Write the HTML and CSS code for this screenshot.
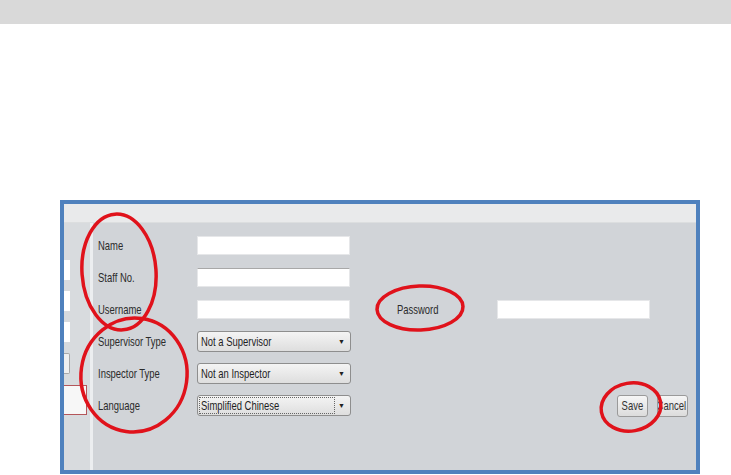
FILE: index.html
```html
<!DOCTYPE html>
<html>
<head>
<meta charset="utf-8">
<title>User details</title>
<link rel="stylesheet" href="styles.css">
</head>
<body>
<div class="topbar"></div>

<div class="shot">
  <div class="shot_head"></div>
  <div class="shot_body">
    <div class="side">
      <div class="stub"></div>
      <div class="stub"></div>
      <div class="stub"></div>
      <div class="stub stub_btn"></div>
      <div class="stub stub_red"></div>
    </div>
    <div class="sep"></div>
    <div class="form">
      <div class="row">
        <span class="lbl">Name</span>
        <input class="txt" type="text">
      </div>
      <div class="row">
        <span class="lbl">Staff No.</span>
        <input class="txt txt_dark" type="text">
      </div>
      <div class="row">
        <span class="lbl">Username</span>
        <input class="txt" type="text">
        <span class="lbl lbl_pw">Password</span>
        <input class="txt" type="password">
      </div>
      <div class="row">
        <span class="lbl">Supervisor Type</span>
        <div class="sel"><span class="sel_val"><span class="sq">Not a Supervisor</span></span><span class="arrow">&#9660;</span></div>
      </div>
      <div class="row">
        <span class="lbl">Inspector Type</span>
        <div class="sel"><span class="sel_val"><span class="sq">Not an Inspector</span></span><span class="arrow">&#9660;</span></div>
      </div>
      <div class="row">
        <span class="lbl">Language</span>
        <div class="sel"><span class="sel_val sel_focus"><span class="sq">Simplified Chinese</span></span><span class="arrow">&#9660;</span></div>
        <div class="btns">
          <button class="btn"><span class="sq sq_mid">Save</span></button>
          <button class="btn btn_cut"><span class="sq sq_right">Cancel</span></button>
        </div>
      </div>
    </div>
  </div>
</div>

<!-- hand drawn marks on top of the screenshot -->
<svg class="marks" width="731" height="475" viewBox="0 0 731 475">
  <g fill="none" stroke="#e0121b" stroke-width="3.5">
    <ellipse cx="119" cy="272" rx="37" ry="58" transform="rotate(-4 119 272)"/>
    <ellipse cx="134" cy="375" rx="53" ry="57" transform="rotate(8 134 375)"/>
    <ellipse cx="420" cy="308" rx="43" ry="22" transform="rotate(-2 420 308)"/>
    <ellipse cx="631" cy="407" rx="30" ry="24" transform="rotate(-10 631 407)"/>
  </g>
</svg>
</body>
</html>
```

FILE: styles.css
```css
body{margin:0;padding:0;background:#fff;font-family:"Liberation Sans",Arial,sans-serif;}
.topbar{height:24px;background:#d9d9d9;}

.shot{width:632px;height:266px;margin:176px 0 0 60px;border:4px solid #4f81bd;background:#d1d4d8;display:flex;flex-direction:column;}
.shot_head{height:18px;background:#e9eaeb;border-bottom:1px solid #dcdedf;}
.shot_body{flex:1;display:flex;}

.side{width:26px;background:#d8dbde;padding-top:37px;display:flex;flex-direction:column;gap:11px;}
.stub{width:6px;height:20px;background:#fff;}
.stub_btn{width:5px;height:19px;background:#f0f0f0;border:1px solid #a9a9a9;border-left:none;border-radius:0 2px 2px 0;}
.stub_red{width:22px;height:28px;background:#f7f7f7;border:1px solid #b4565a;border-left:none;}
.sep{width:3px;background:#eceef0;}

/* the screenshot was squeezed sideways, so the text is too */
.sq{display:inline-block;transform:scaleX(.7);transform-origin:left center;white-space:nowrap;}
.sq_mid{transform-origin:center;}
.sq_right{transform-origin:right center;}

.form{flex:1;padding:12px 8px 0 5px;}
.row{display:flex;align-items:center;height:21px;margin-bottom:11px;}
.lbl{width:99px;font-size:13.5px;color:#2b2b2b;transform:scaleX(.7);transform-origin:left center;white-space:nowrap;}
.lbl_pw{margin:0 46px 0 47px;width:54px;}
.txt{width:153px;height:19px;margin:0;padding:0;border:1px solid #e6e7e9;background:#fff;box-sizing:border-box;}
.txt_dark{border-top-color:#a8a8a8;}

.sel{width:154px;height:21px;box-sizing:border-box;border:1px solid #8e8e8e;border-radius:3px;background:linear-gradient(#f4f4f4,#dedede);display:flex;align-items:center;justify-content:space-between;padding:0 5px 0 1px;font-size:13.5px;color:#1e1e1e;}
.sel_val{padding:0 1px;line-height:15px;border:1px dotted transparent;width:132px;overflow:hidden;}
.sel_focus{border-color:#666;}
.arrow{font-size:7px;color:#222;}

.btns{margin-left:auto;display:flex;gap:9px;}
.btn{width:31px;height:22px;padding:0;border:1px solid #9a9a9a;border-radius:3px;background:linear-gradient(#f6f6f6,#dcdcdc);font-family:inherit;font-size:13.5px;color:#333;overflow:hidden;display:flex;align-items:center;justify-content:center;}
.btn_cut{justify-content:flex-end;padding-right:1px;}

.marks{position:absolute;left:0;top:0;pointer-events:none;}
```
